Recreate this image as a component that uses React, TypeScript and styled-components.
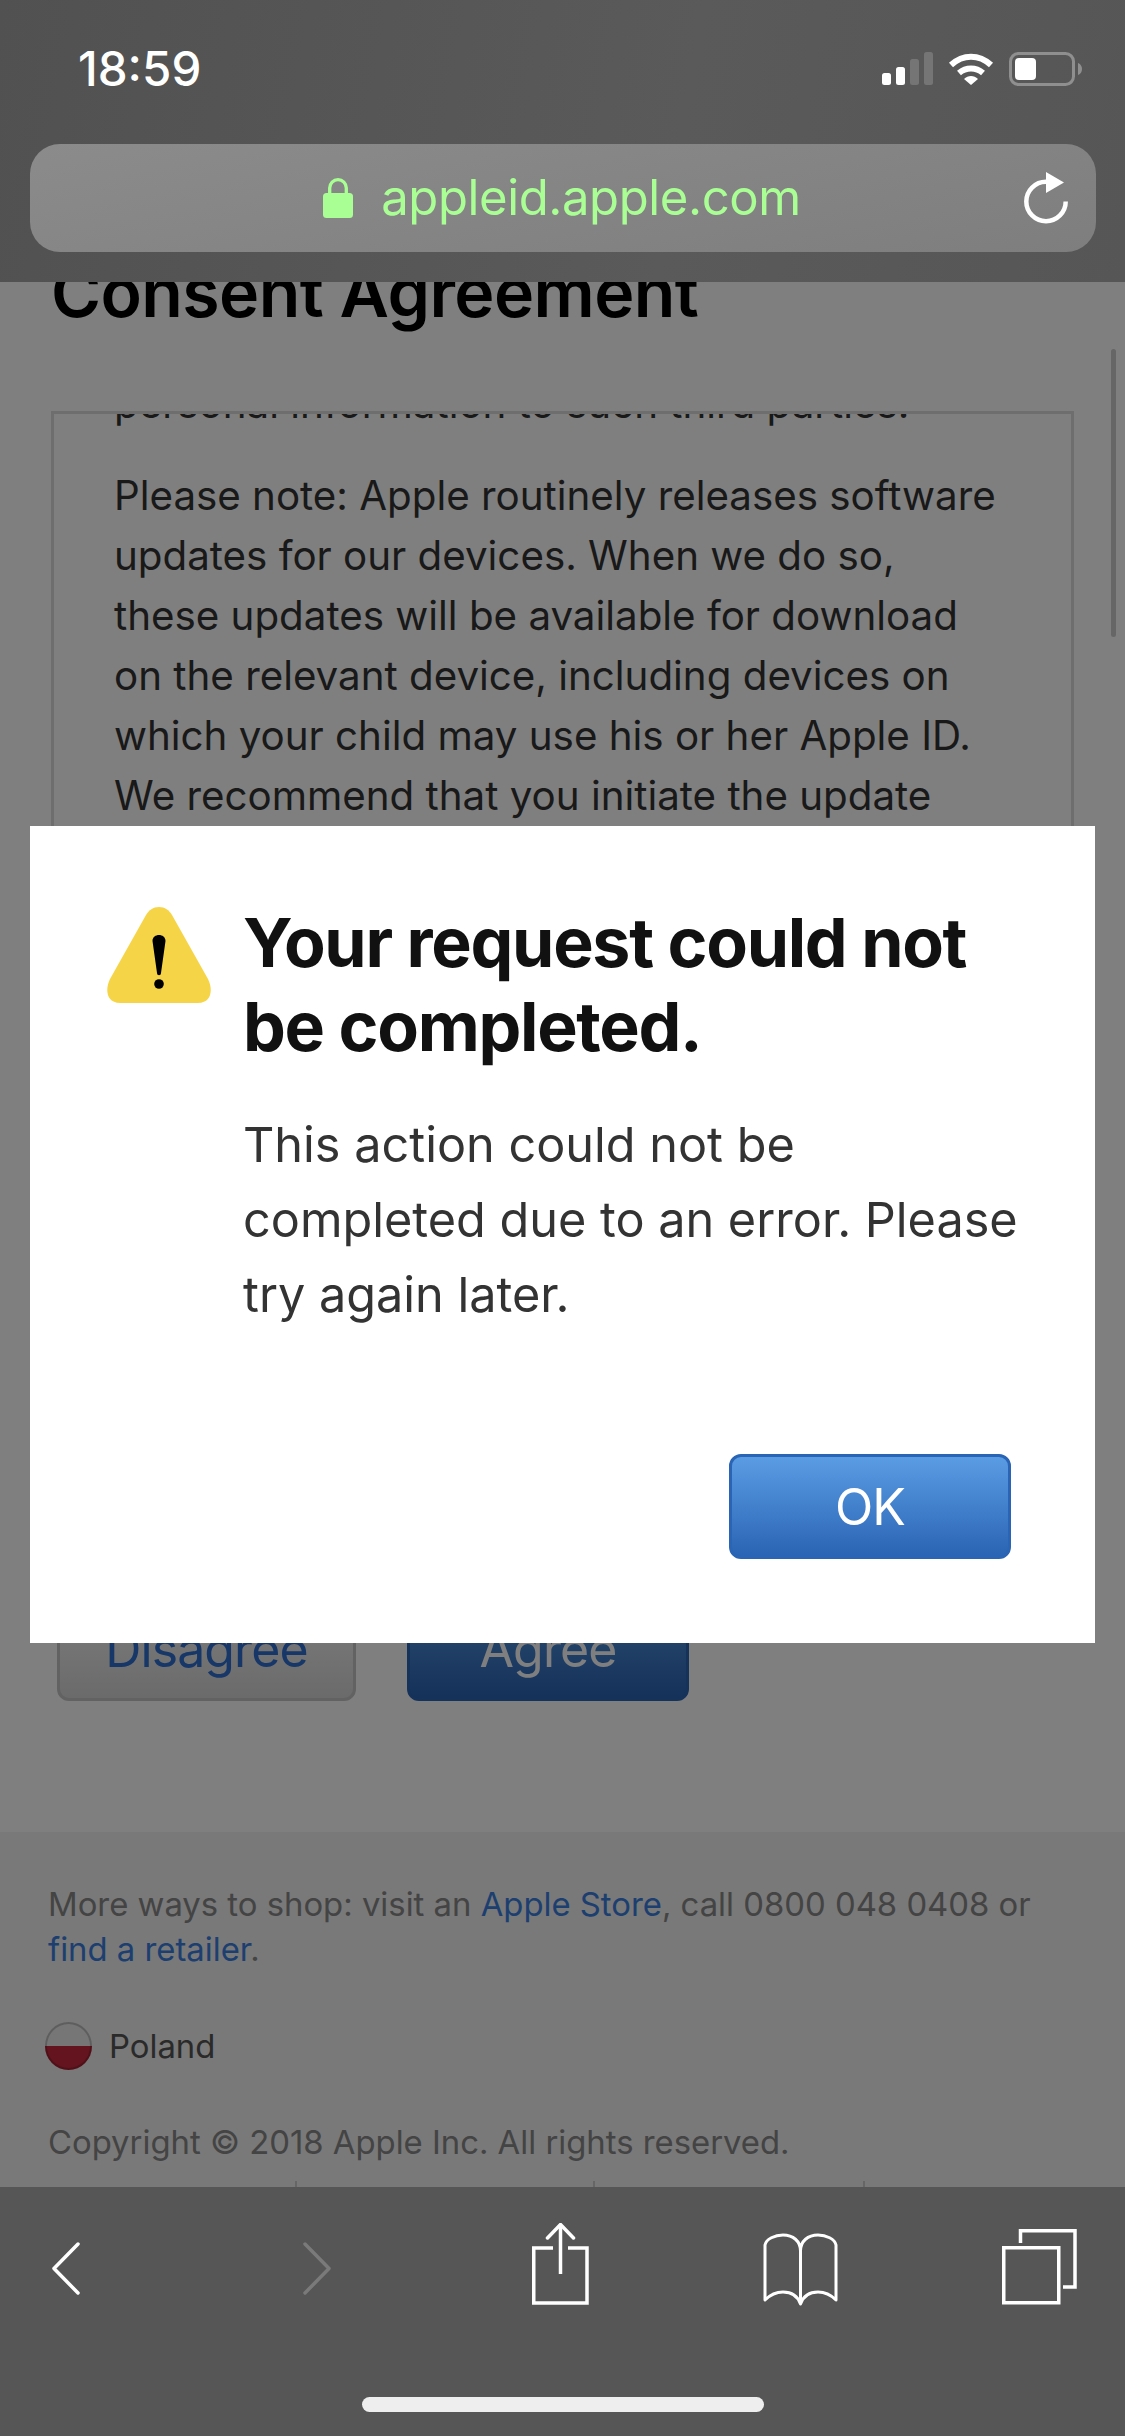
import React from "react";
import styled, { createGlobalStyle } from "styled-components";

const Global = createGlobalStyle`
  html, body { margin: 0; padding: 0; background: #808080; }
  * { box-sizing: border-box; }
  body { font-family: Inter, "Noto Sans", "Liberation Sans", sans-serif; }
`;

const Phone = styled.div`
  width: 1125px;
  height: 2436px;
  display: flex;
  flex-direction: column;
  overflow: hidden;
`;

const TopBar = styled.header`
  height: 282px;
  flex: none;
  background: linear-gradient(100deg, #515151 0%, #5a5a5a 60%, #565656 100%);
  padding: 0 29px 0 30px;
  display: flex;
  flex-direction: column;
`;

const StatusRow = styled.div`
  height: 144px;
  display: flex;
  justify-content: space-between;
  align-items: flex-start;
`;

const Time = styled.div`
  margin: 40px 0 0 48px;
  font-size: 47.5px;
  line-height: 58px;
  font-weight: 500;
  color: #fff;
`;

const StatusIcons = styled.div`
  display: flex;
  align-items: flex-start;
  margin-top: 52px;
  margin-right: 13px;
`;

const StatusSvg = styled.svg<{ $ml?: number }>`
  display: block;
  margin-left: ${(p) => p.$ml ?? 0}px;
`;

const UrlBar = styled.div`
  height: 108px;
  border-radius: 30px;
  background: linear-gradient(170deg, #8b8b8b 0%, #7e7e7e 100%);
  position: relative;
  display: flex;
  align-items: center;
  justify-content: center;
  gap: 28px;
  padding-right: 2px;
`;

const Domain = styled.span`
  font-size: 49px;
  line-height: 60px;
  color: #aaff94;
  letter-spacing: -0.4px;
`;

const Reload = styled.svg`
  position: absolute;
  right: 25px;
  top: 26px;
`;

const Content = styled.main`
  flex: 1;
  position: relative;
  overflow: hidden;
  background: #fff;
  display: flex;
  flex-direction: column;
`;

const Title = styled.h1`
  margin: -30px 0 0 51px;
  font-size: 68px;
  line-height: 80px;
  font-weight: 600;
  letter-spacing: -0.6px;
  color: #000;
`;

const AgreementBox = styled.section`
  margin: 79px 51px 0;
  height: 1124px;
  border: 3px solid #dcdcdc;
  overflow: hidden;
  padding: 0 60px;
`;

const BoxText = styled.p<{ $clipped?: boolean }>`
  margin: ${(p) => (p.$clipped ? "-40px 0 32px" : "0")};
  font-size: 40.3px;
  line-height: 60px;
  color: #333;
  white-space: nowrap;
`;

const Actions = styled.div`
  margin: 61px 0 0 57px;
  display: flex;
  gap: 51px;
`;

const PageButton = styled.div<{ $primary?: boolean }>`
  width: ${(p) => (p.$primary ? 282 : 299)}px;
  height: 105px;
  border-radius: 12px;
  display: flex;
  align-items: center;
  justify-content: center;
  font-size: 50px;
  font-weight: 400;
  letter-spacing: -0.9px;
  color: ${(p) => (p.$primary ? "#fff" : "#2f6fd0")};
  background: ${(p) =>
    p.$primary
      ? "linear-gradient(#5a9ce4, #2a64b4)"
      : "linear-gradient(#fafafa, #d6d6d6)"};
  border: 3px solid ${(p) => (p.$primary ? "#2a64b4" : "#c4c4c4")};
`;

const Footer = styled.footer`
  margin-top: 131px;
  flex: 1;
  background: #f2f2f2;
  padding: 50px 48px 0;
  font-size: 32.85px;
  line-height: 45px;
  color: #888;
  position: relative;
`;

const FooterLink = styled.span`
  color: #3a7ee0;
`;

const Country = styled.div`
  margin-top: 50px;
  margin-left: -3px;
  display: flex;
  align-items: center;
  gap: 17px;
  color: #555;
  height: 48px;
`;

const Flag = styled.span`
  width: 47px;
  height: 48px;
  border-radius: 50%;
  background: linear-gradient(#ececec 50%, #c8283c 50%);
  box-shadow: inset 0 0 0 2px rgba(0, 0, 0, 0.2);
`;

const Copyright = styled.div`
  margin-top: 50px;
`;

const Ticks = styled.div`
  position: absolute;
  left: 0;
  bottom: 0;
  height: 6px;
  display: flex;
`;

const Tick = styled.span<{ $ml: number }>`
  width: 2px;
  margin-left: ${(p) => p.$ml}px;
  background: #ccc;
`;

const ScrollThumb = styled.div`
  position: absolute;
  top: 67px;
  right: 9px;
  width: 5px;
  height: 288px;
  border-radius: 3px;
  background: #ccc;
`;

const Dim = styled.div`
  position: absolute;
  inset: 0;
  background: rgba(0, 0, 0, 0.5);
`;

const Modal = styled.div`
  position: absolute;
  top: 544px;
  left: 30px;
  width: 1065px;
  height: 817px;
  background: #fff;
  padding: 81px 84px 84px 76px;
  display: flex;
  flex-direction: column;
`;

const ModalBody = styled.div`
  display: flex;
  gap: 31px;
  flex: 1;
`;

const WarnIcon = styled.svg`
  flex: none;
  display: block;
`;

const ModalCopy = styled.div`
  display: flex;
  flex-direction: column;
  margin-top: -7px;
`;

const ModalTitle = styled.h2`
  margin: 0;
  font-size: 68px;
  line-height: 84px;
  font-weight: 700;
  color: #111;
  letter-spacing: -1.3px;
  white-space: nowrap;
`;

const ModalText = styled.p`
  margin: 39px 0 0;
  font-size: 48.6px;
  line-height: 75px;
  color: #333;
  white-space: nowrap;
`;

const ModalActions = styled.div`
  display: flex;
  justify-content: flex-end;
`;

const BottomBar = styled.nav`
  height: 249px;
  flex: none;
  background: #565656;
  position: relative;
  display: flex;
  align-items: flex-start;
`;

const ToolSlot = styled.div<{ $ml: number; $mt: number }>`
  margin-left: ${(p) => p.$ml}px;
  margin-top: ${(p) => p.$mt}px;
  flex: none;
  line-height: 0;
`;

const HomeBar = styled.div`
  position: absolute;
  left: 362px;
  bottom: 24px;
  width: 402px;
  height: 15px;
  border-radius: 8px;
  background: #eee;
`;

const Line = styled.g`
  fill: none;
  stroke: #fff;
`;

export default function App() {
  return (
    <Phone>
      <Global />
      <TopBar>
        <StatusRow>
          <Time>18:59</Time>
          <StatusIcons>
            <StatusSvg width="51" height="33" viewBox="0 0 51 33">
              <rect x="0" y="21" width="9" height="12" rx="2.5" fill="#fff" />
              <rect x="14" y="15" width="9" height="18" rx="2.5" fill="#fff" />
              <rect x="28" y="7" width="9" height="26" rx="2.5" fill="#757575" />
              <rect x="42" y="0" width="9" height="33" rx="2.5" fill="#757575" />
            </StatusSvg>
            <StatusSvg $ml={15} width="46" height="33" viewBox="0 0 46 33">
              <path d="M3 13 C15 2 31 2 43 13" fill="none" stroke="#fff" strokeWidth="6" strokeLinecap="butt" />
              <path d="M11 21 C18 15 28 15 35 21" fill="none" stroke="#fff" strokeWidth="6" />
              <path d="M16 27 C20 23 26 23 30 27 L23 33 Z" fill="#fff" />
            </StatusSvg>
            <StatusSvg $ml={15} width="74" height="34" viewBox="0 0 74 34">
              <rect x="1.5" y="1.5" width="63" height="31" rx="8" fill="none" stroke="#8f8f8f" strokeWidth="3" />
              <rect x="6" y="6" width="21" height="22" rx="4" fill="#fff" />
              <path d="M69 11 C72 12 73 15 73 17 C73 19 72 22 69 23 Z" fill="#8f8f8f" />
            </StatusSvg>
          </StatusIcons>
        </StatusRow>
        <UrlBar>
          <svg width="30" height="40" viewBox="0 0 30 40">
            <path d="M6.700 17 V10 A8.300 8.300 0 0 1 23.300 10 V17" fill="none" stroke="#aaff94" strokeWidth="3.300" />
            <rect x="0" y="15" width="30" height="25" rx="3.500" fill="#aaff94" />
          </svg>
          <Domain>appleid.apple.com</Domain>
          <Reload width="50" height="54" viewBox="0 0 50 54">
            <path d="M44.700 31.500 A19.700 19.700 0 1 1 25 11.800" fill="none" stroke="#fff" strokeWidth="4.500" />
            <path d="M25 2 L43 12.500 L25 23 Z" fill="#fff" />
          </Reload>
        </UrlBar>
      </TopBar>

      <Content>
        <Title>Consent Agreement</Title>
        <AgreementBox>
          <BoxText $clipped>personal information to such third parties.</BoxText>
          <BoxText>
            Please note: Apple routinely releases software
            <br />
            updates for our devices. When we do so,
            <br />
            these updates will be available for download
            <br />
            on the relevant device, including devices on
            <br />
            which your child may use his or her Apple ID.
            <br />
            We recommend that you initiate the update
          </BoxText>
        </AgreementBox>
        <Actions>
          <PageButton>Disagree</PageButton>
          <PageButton $primary>Agree</PageButton>
        </Actions>
        <Footer>
          More ways to shop: visit an <FooterLink>Apple Store</FooterLink>, call 0800 048 0408 or
          <br />
          <FooterLink>find a retailer</FooterLink>.
          <Country>
            <Flag />
            Poland
          </Country>
          <Copyright>Copyright © 2018 Apple Inc. All rights reserved.</Copyright>
          <Ticks>
            <Tick $ml={295} />
            <Tick $ml={296} />
            <Tick $ml={268} />
          </Ticks>
        </Footer>
        <ScrollThumb />
        <Dim />
        <Modal>
          <ModalBody>
            <WarnIcon width="106" height="96" viewBox="0 0 106 96">
              <path
                d="M53 0 C59 0 63 3 66 8 L102 72 C107 82 106 96 92 96 L14 96 C0 96 -1 82 4 72 L40 8 C43 3 47 0 53 0 Z"
                fill="#f5d547"
              />
              <path d="M46.500 34 C46.500 26 59.500 26 59.500 34 L55 66 C55 69 51 69 51 66 Z" fill="#000" />
              <circle cx="53" cy="77" r="4.800" fill="#000" />
            </WarnIcon>
            <ModalCopy>
              <ModalTitle>
                Your request could not
                <br />
                be completed.
              </ModalTitle>
              <ModalText>
                This action could not be
                <br />
                completed due to an error. Please
                <br />
                try again later.
              </ModalText>
            </ModalCopy>
          </ModalBody>
          <ModalActions>
            <PageButton $primary>OK</PageButton>
          </ModalActions>
        </Modal>
      </Content>

      <BottomBar>
        <ToolSlot $ml={52} $mt={55}>
          <svg width="28" height="53" viewBox="0 0 28 53">
            <Line strokeWidth="3.500" strokeLinecap="round" strokeLinejoin="round">
              <path d="M26 2 L2 26.500 L26 51" />
            </Line>
          </svg>
        </ToolSlot>
        <ToolSlot $ml={223} $mt={55}>
          <svg width="28" height="53" viewBox="0 0 28 53">
            <path d="M2 2 L26 26.500 L2 51" fill="none" stroke="#7a7a7a" strokeWidth="3.500" strokeLinecap="round" strokeLinejoin="round" />
          </svg>
        </ToolSlot>
        <ToolSlot $ml={201} $mt={36}>
          <svg width="57" height="82" viewBox="0 0 57 82">
            <Line strokeWidth="3.500">
              <path d="M21 25 H1.750 V80 H55 V25 H36" />
              <path d="M28.500 2 V51" />
              <path d="M15.500 15 L28.500 1.500 L41.500 15" strokeLinecap="round" />
            </Line>
          </svg>
        </ToolSlot>
        <ToolSlot $ml={174} $mt={46}>
          <svg width="75" height="73" viewBox="0 0 75 73">
            <Line strokeWidth="3" strokeLinejoin="round">
              <path d="M2 67 V12 C3 6 12 2 20 2 C30 2 37.500 8 37.500 18 C37.500 8 45 2 55 2 C63 2 72 6 73 12 V67 C67 61 61 59 55 59 C46 59 40 64 37.500 71 C35 64 29 59 20 59 C14 59 8 61 2 67 Z" />
              <path d="M37.500 18 V71" />
            </Line>
          </svg>
        </ToolSlot>
        <ToolSlot $ml={164} $mt={42}>
          <svg width="75" height="76" viewBox="0 0 75 76">
            <Line strokeWidth="3.500">
              <rect x="1.750" y="18.750" width="55" height="55" />
              <path d="M18.500 14 V1.750 H73 V58 H61" />
            </Line>
          </svg>
        </ToolSlot>
        <HomeBar />
      </BottomBar>
    </Phone>
  );
}
